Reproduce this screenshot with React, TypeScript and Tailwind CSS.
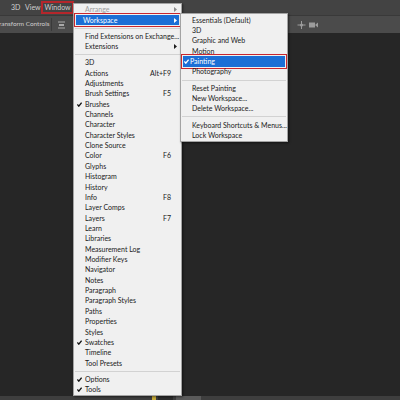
import type { ReactNode } from 'react'

type Item =
  | { sep: true }
  | { label: string; key?: string; checked?: boolean; arrow?: boolean; disabled?: boolean; active?: boolean }

const windowItems: Item[] = [
  { label: 'Arrange', arrow: true, disabled: true },
  { label: 'Workspace', arrow: true, active: true },
  { sep: true },
  { label: 'Find Extensions on Exchange...' },
  { label: 'Extensions', arrow: true },
  { sep: true },
  { label: '3D' },
  { label: 'Actions', key: 'Alt+F9' },
  { label: 'Adjustments' },
  { label: 'Brush Settings', key: 'F5' },
  { label: 'Brushes', checked: true },
  { label: 'Channels' },
  { label: 'Character' },
  { label: 'Character Styles' },
  { label: 'Clone Source' },
  { label: 'Color', key: 'F6' },
  { label: 'Glyphs' },
  { label: 'Histogram' },
  { label: 'History' },
  { label: 'Info', key: 'F8' },
  { label: 'Layer Comps' },
  { label: 'Layers', key: 'F7' },
  { label: 'Learn' },
  { label: 'Libraries' },
  { label: 'Measurement Log' },
  { label: 'Modifier Keys' },
  { label: 'Navigator' },
  { label: 'Notes' },
  { label: 'Paragraph' },
  { label: 'Paragraph Styles' },
  { label: 'Paths' },
  { label: 'Properties' },
  { label: 'Styles' },
  { label: 'Swatches', checked: true },
  { label: 'Timeline' },
  { label: 'Tool Presets' },
  { sep: true },
  { label: 'Options', checked: true },
  { label: 'Tools', checked: true },
]

const workspaceItems: Item[] = [
  { label: 'Essentials (Default)' },
  { label: '3D' },
  { label: 'Graphic and Web' },
  { label: 'Motion' },
  { label: 'Painting', checked: true, active: true },
  { label: 'Photography' },
  { sep: true },
  { label: 'Reset Painting' },
  { label: 'New Workspace...' },
  { label: 'Delete Workspace...' },
  { sep: true },
  { label: 'Keyboard Shortcuts & Menus...' },
  { label: 'Lock Workspace' },
]

function Check({ white }: { white?: boolean }) {
  return (
    <svg width="5" height="5" viewBox="0 0 5 5" className="shrink-0">
      <path d="M0.4 2.5 L1.8 4.2 L4.6 0.7" fill="none" stroke={white ? '#ffffff' : '#111111'} strokeWidth="1.3" />
    </svg>
  )
}

function Arrow({ color }: { color: string }) {
  return (
    <svg width="3" height="5" viewBox="0 0 3 5" className="shrink-0">
      <polygon points="0,0 3,2.5 0,5" fill={color} />
    </svg>
  )
}

function Menu({ items, className }: { items: Item[]; className: string }) {
  return (
    <div className={`absolute flex flex-col border border-[#a3a3a3] bg-[#f0f0f0] shadow-[1px_1px_2px_rgba(0,0,0,0.5)] ${className}`}>
      {items.map((it, i) => {
        if ('sep' in it) {
          return (
            <div key={i} className="flex h-[5.8px] shrink-0 items-center px-[1px]">
              <div className="h-px w-full bg-[#d2d2d2]" />
            </div>
          )
        }
        const fg = it.active ? 'text-white' : it.disabled ? 'text-[#9d9d9d]' : 'text-[#1a1a1a]'
        return (
          <div
            key={i}
            className={`relative flex h-[10.36px] shrink-0 items-center ${it.active ? 'mx-[2px] bg-[#1b6fd6] outline-[1.5px] outline-offset-[1px] outline-[#c8262e] outline' : ''}`}
          >
            <span className={`flex w-[9px] shrink-0 justify-center ${it.active ? '-ml-[2px] pl-[2px]' : 'pl-[1px]'}`}>
              {it.checked && <Check white={it.active} />}
            </span>
            <span className={`flex-1 whitespace-nowrap ${it.active ? '' : 'pl-[2px]'} ${fg}`}>{it.label}</span>
            {it.key && <span className={`mr-[10px] whitespace-nowrap ${fg}`}>{it.key}</span>}
            {it.arrow && (
              <span className={it.active ? 'mr-[2px]' : 'mr-[4px]'}>
                <Arrow color={it.active ? '#ffffff' : it.disabled ? '#8a8a8a' : '#1c1c1c'} />
              </span>
            )}
          </div>
        )
      })}
    </div>
  )
}

function Icon({ children, w }: { children: ReactNode; w: number }) {
  return (
    <svg width={w} height="8" viewBox={`0 0 ${w} 8`} className="shrink-0">
      {children}
    </svg>
  )
}

export default function App() {
  return (
    <div
      className="relative flex h-[400px] w-[400px] flex-col overflow-hidden bg-[#262626] text-[7px] leading-none"
      style={{ fontFamily: 'Lato, "Liberation Sans", sans-serif' }}
    >
      <div className="flex h-[15px] shrink-0 items-center bg-[#434343] text-[7px] text-[#d0d0d0]">
        <span className="ml-[11px] w-[14px]">3D</span>
        <span className="w-[16px]">View</span>
        <span className="flex h-[13px] w-[33px] items-center justify-center border-2 border-[#b5262b]">Window</span>
      </div>

      <div className="flex h-[18px] shrink-0 items-center border-t border-[#393939] bg-[#4b4b4b] text-[6.4px] text-[#cfcfcf]">
        <span className="-ml-[1px] w-[52px] whitespace-nowrap">ransform Controls</span>
        <div className="h-[13px] w-px bg-[#3a3a3a]" />
        <span className="ml-[6px]">
          <Icon w={7}>
            <rect x="0" y="0.5" width="7" height="1" fill="#a9a9a9" />
            <rect x="1" y="3" width="5" height="2" fill="#a9a9a9" />
            <rect x="0" y="6.5" width="7" height="1" fill="#a9a9a9" />
          </Icon>
        </span>
        <span className="ml-auto">
          <Icon w={9}>
            <path d="M4.5 0 L4.5 8 M0.5 4 L8.5 4" stroke="#9c9c9c" strokeWidth="1" />
            <circle cx="4.5" cy="4" r="1.6" fill="#9c9c9c" />
          </Icon>
        </span>
        <span className="ml-[3px] mr-[82px]">
          <Icon w={9}>
            <rect x="0" y="1.5" width="6" height="5" fill="#9c9c9c" />
            <polygon points="6,4 9,1.5 9,6.5" fill="#9c9c9c" />
          </Icon>
        </span>
      </div>

      <div className="flex-1" />

      <div className="flex h-[4px] shrink-0 items-stretch bg-[#3e3e3e]">
        <div className="ml-[152px] w-[4px] bg-[#c9ad3a]" />
        <div className="ml-[2px] w-[15px] bg-[#2c2c2c]" />
        <div className="ml-[3px] w-[25px] bg-[#5a5a5a]" />
      </div>

      <Menu items={windowItems} className="left-[73px] top-[3px] w-[109px] pt-[0.5px]" />
      <Menu items={workspaceItems} className="left-[180px] top-[13px] w-[108px] pt-[1px] pb-[0.5px]" />
    </div>
  )
}
